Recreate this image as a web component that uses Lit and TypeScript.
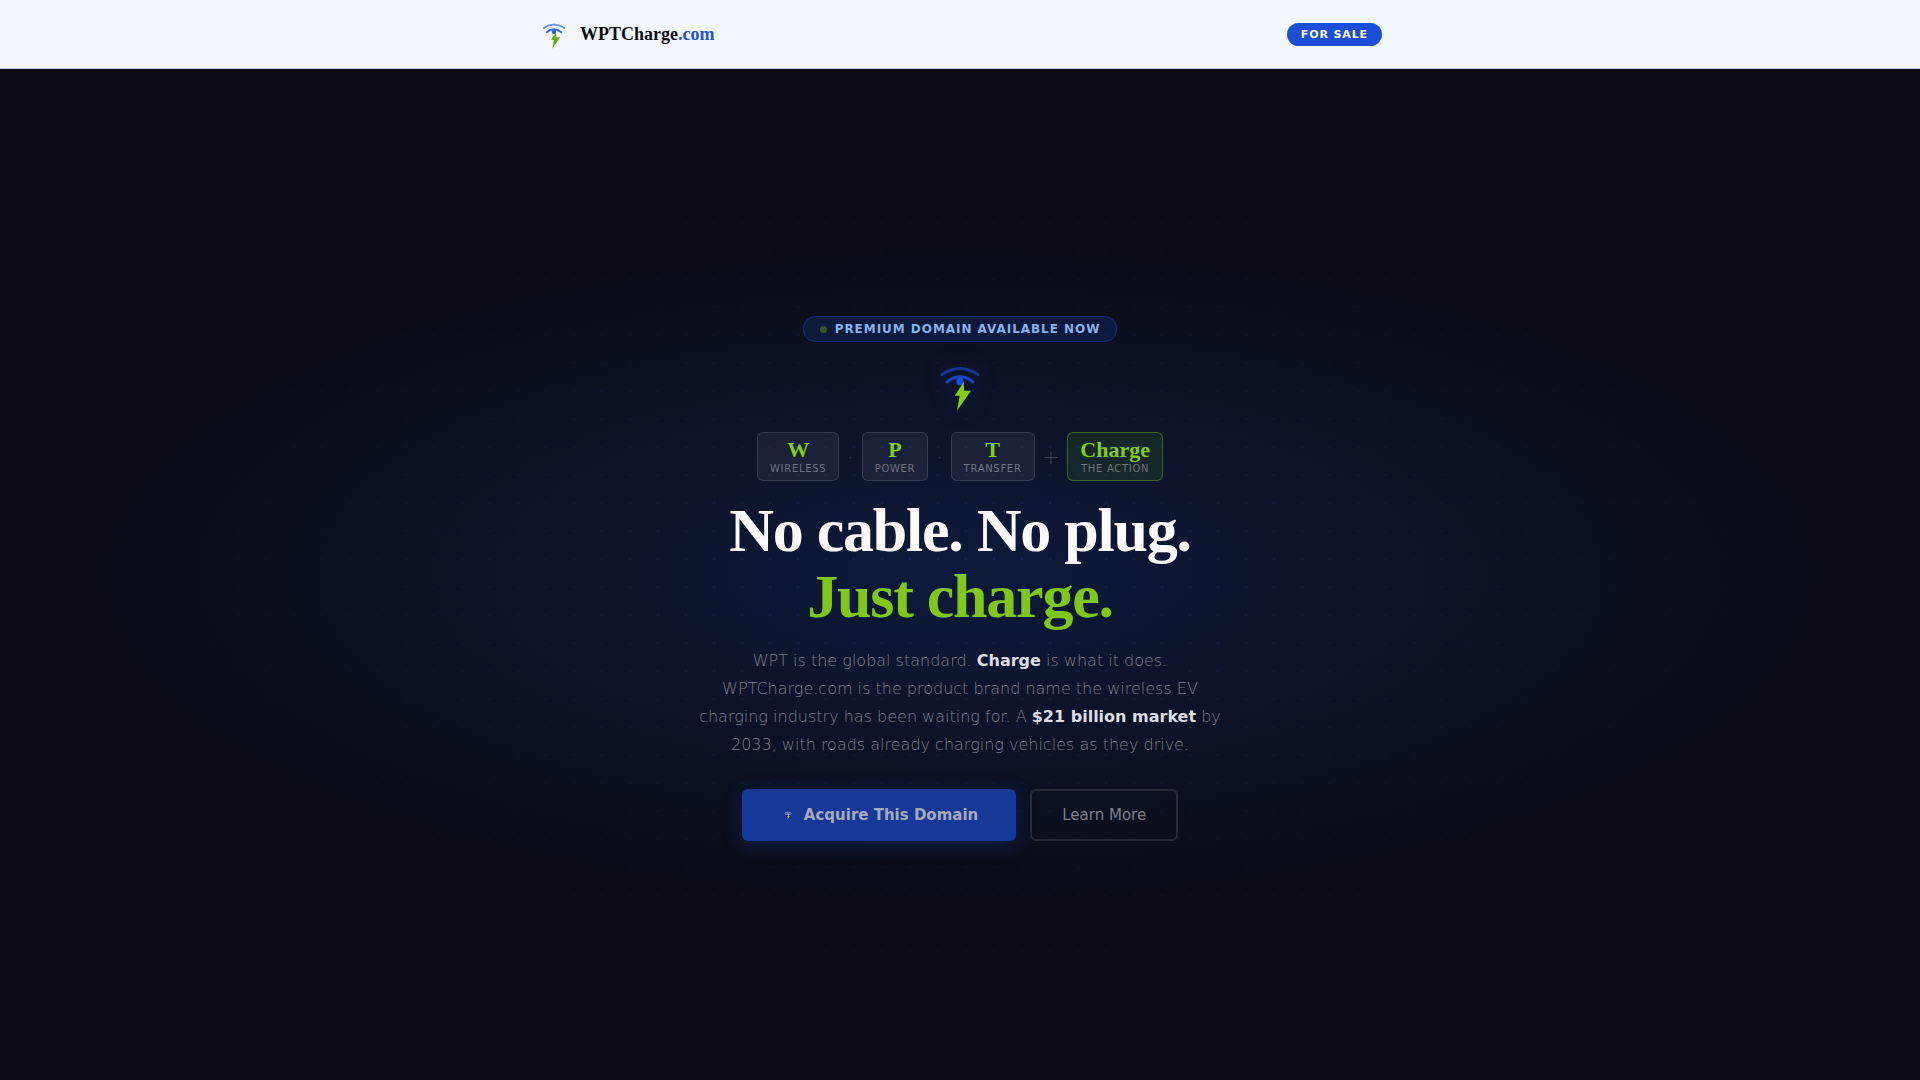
import { LitElement, html, css, svg } from "lit";
import { customElement, property } from "lit/decorators.js";

@customElement("charge-mark")
export class ChargeMark extends LitElement {
  @property({ reflect: true }) tone: "header" | "hero" | "button" = "hero";

  static styles = css`
    :host {
      display: block;
      flex: none;
      box-sizing: border-box;
      width: 56px;
      height: 56px;
      --wave: #1d4ed8;
      --bolt: #84cc16;
      --outer: 0.6;
      --inner: 0.85;
      --stroke: 3;
    }
    :host([tone="header"]) {
      width: 32px;
      height: 32px;
      --bolt: #6fa81c;
      --stroke: 3.4;
    }
    :host([tone="hero"]) {
      filter: drop-shadow(0 0 12px rgba(29, 78, 216, 0.3));
    }
    :host([tone="button"]) {
      width: 16px;
      height: 16px;
      padding: 3px;
      --wave: #c3c7d2;
      --bolt: #e0ac1c;
      --outer: 0.8;
      --inner: 1;
      --stroke: 4;
    }
    .mark {
      display: block;
      width: 100%;
      height: 100%;
    }
    .outer,
    .inner {
      fill: none;
      stroke: var(--wave);
      stroke-width: var(--stroke);
      stroke-linecap: round;
    }
    .outer {
      opacity: var(--outer);
    }
    .inner {
      opacity: var(--inner);
    }
    .dot {
      fill: var(--wave);
    }
    .bolt {
      fill: var(--bolt);
    }
  `;

  render() {
    return html`<svg class="mark" viewBox="0 0 56 56" aria-hidden="true">
      ${svg`
        <path class="outer" d="M10 17.5 Q28 5.5 46 17.5" />
        <path class="inner" d="M15.2 24.8 Q28 14.8 40.8 24.8" />
        <circle class="dot" cx="28" cy="24.5" r="3.7" />
        <path class="bolt" d="M31.6 25 L22.8 38.7 L27.6 38.7 L25 53.7 L39 33.8 L32.2 33.8 Z" />
      `}
    </svg>`;
  }
}

interface Part {
  letter: string;
  label: string;
  separator?: string;
  accent?: boolean;
}

const PARTS: Part[] = [
  { letter: "W", label: "Wireless", separator: "·" },
  { letter: "P", label: "Power", separator: "·" },
  { letter: "T", label: "Transfer", separator: "+" },
  { letter: "Charge", label: "The Action", accent: true },
];

@customElement("app-root")
export class AppRoot extends LitElement {
  static styles = css`
    :host {
      display: flex;
      flex-direction: column;
      min-height: 100vh;
      background: #0a0d14;
      font-family: "DejaVu Sans", sans-serif;
    }
    .header {
      background: #f3f7ff;
      border-bottom: 1px solid #bfd0f5;
    }
    .bar {
      box-sizing: border-box;
      max-width: 900px;
      min-height: 68px;
      margin: 0 auto;
      padding: 0 28px;
      display: flex;
      align-items: center;
      justify-content: space-between;
    }
    .brand {
      display: flex;
      align-items: center;
      gap: 10px;
      color: #0a0d14;
      font: 700 18px/24px "Liberation Serif", serif;
      text-decoration: none;
    }
    .tld {
      color: #1d4ed8;
    }
    .sale {
      padding: 4px 14px;
      border-radius: 20px;
      background: #1d4ed8;
      color: #fff;
      font-size: 11px;
      font-weight: 700;
      line-height: 15px;
      letter-spacing: 0.08em;
      text-transform: uppercase;
    }
    .hero {
      position: relative;
      isolation: isolate;
      flex: 1;
      display: flex;
      flex-direction: column;
      align-items: center;
      justify-content: center;
      padding: 48px 24px 40px;
      text-align: center;
      background: radial-gradient(
        ellipse 70% 50% at 50% 50%,
        rgba(29, 78, 216, 0.2),
        transparent 65%
      );
    }
    /* Dot grid that fades out towards the edges, behind the content */
    .hero::before {
      content: "";
      position: absolute;
      inset: 0;
      z-index: -1;
      background: radial-gradient(circle, rgba(29, 78, 216, 0.18) 1px, transparent 1px) 0 0 / 28px
        28px;
      mask-image: radial-gradient(ellipse 80% 80% at 50% 50%, #000, transparent 70%);
    }
    .status {
      display: flex;
      align-items: center;
      gap: 8px;
      padding: 5px 16px;
      border: 1px solid rgba(29, 78, 216, 0.4);
      border-radius: 20px;
      background: rgba(29, 78, 216, 0.16);
      color: #86b3ee;
      font-size: 12px;
      font-weight: 700;
      line-height: 14px;
      letter-spacing: 0.08em;
      text-transform: uppercase;
    }
    .pulse {
      width: 7px;
      height: 7px;
      border-radius: 50%;
      background: #38582c;
    }
    .emblem {
      margin: 15px 0 19px;
    }
    .parts {
      display: flex;
      flex-wrap: wrap;
      align-items: center;
      justify-content: center;
      gap: 8px;
      margin-bottom: 16px;
    }
    .part {
      padding: 6px 12px;
      border: 1px solid rgba(255, 255, 255, 0.12);
      border-radius: 6px;
      background: rgba(255, 255, 255, 0.06);
    }
    .part.accent {
      border-color: rgba(132, 204, 22, 0.36);
      background: rgba(132, 204, 22, 0.1);
    }
    .letter {
      display: block;
      color: #84cc16;
      font: 700 22px/22px "Liberation Serif", serif;
    }
    .label {
      display: block;
      margin-top: 2px;
      color: #70757f;
      font-size: 10px;
      line-height: 11px;
      letter-spacing: 0.07em;
      text-transform: uppercase;
    }
    .separator {
      color: rgba(255, 255, 255, 0.22);
      font-size: 20px;
      font-weight: 300;
      line-height: 22px;
    }
    .title {
      margin: 0 0 18px;
      color: #fafafa;
      font: 700 62px/66px "Liberation Serif", serif;
      letter-spacing: -0.02em;
    }
    .highlight {
      display: block;
      color: #80c818;
    }
    .lead {
      max-width: 540px;
      margin: 0 0 30px;
      color: #7c808a;
      font-size: 16px;
      font-weight: 300;
      line-height: 28px;
    }
    .lead strong {
      color: #dcdee3;
      font-weight: 700;
    }
    .actions {
      display: flex;
      flex-wrap: wrap;
      justify-content: center;
      gap: 14px;
    }
    .action {
      display: flex;
      align-items: center;
      box-sizing: border-box;
      min-height: 52px;
      border-radius: 6px;
      font-size: 15px;
      line-height: 18px;
      text-decoration: none;
    }
    .primary {
      gap: 8px;
      padding: 0 38px;
      background: #163897;
      color: #a5abbb;
      font-weight: 700;
      box-shadow: 0 4px 20px rgba(29, 78, 216, 0.25);
    }
    .secondary {
      padding: 0 30px;
      border: 2px solid #282c38;
      color: #7c8089;
    }
  `;

  private renderPart(part: Part) {
    return html`
      <div class="part ${part.accent ? "accent" : ""}">
        <span class="letter">${part.letter}</span>
        <span class="label">${part.label}</span>
      </div>
      ${part.separator ? html`<span class="separator">${part.separator}</span>` : null}
    `;
  }

  render() {
    return html`
      <header class="header">
        <div class="bar">
          <a class="brand" href="#top">
            <charge-mark tone="header"></charge-mark>
            <span>WPTCharge<span class="tld">.com</span></span>
          </a>
          <span class="sale">For Sale</span>
        </div>
      </header>
      <main class="hero" id="top">
        <div class="status"><span class="pulse"></span>Premium Domain Available Now</div>
        <charge-mark class="emblem" tone="hero"></charge-mark>
        <div class="parts">${PARTS.map((part) => this.renderPart(part))}</div>
        <h1 class="title">No cable. No plug.<span class="highlight">Just charge.</span></h1>
        <p class="lead">
          WPT is the global standard. <strong>Charge</strong> is what it does. WPTCharge.com is the
          product brand name the wireless EV charging industry has been waiting for. A
          <strong>$21 billion market</strong> by 2033, with roads already charging vehicles as they
          drive.
        </p>
        <div class="actions">
          <a class="action primary" href="#acquire">
            <charge-mark tone="button"></charge-mark>Acquire This Domain
          </a>
          <a class="action secondary" href="#more">Learn More</a>
        </div>
      </main>
    `;
  }
}
